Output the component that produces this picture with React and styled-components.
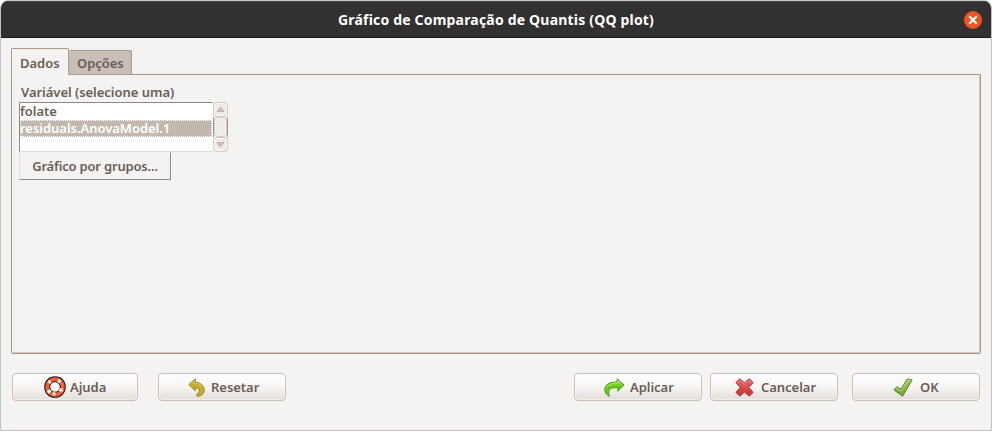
import React from 'react';
import styled, { createGlobalStyle } from 'styled-components';

const Global = createGlobalStyle`
  * { box-sizing: border-box; }
  body { margin: 0; background: #fff; font-family: "Noto Sans", sans-serif; }
`;

const Window = styled.main`
  width: 992px;
  height: 431px;
  display: flex;
  flex-direction: column;
  background: #f5f3f2;
  border: 1px solid #c3c3c1;
  border-radius: 8px 8px 0 0;
  overflow: hidden;
  color: #6a5d54;
  font-size: 13px;
  font-weight: 600;
  letter-spacing: -0.03px;
  line-height: 17px;
  white-space: nowrap;
  cursor: default;
`;

const TitleBar = styled.header`
  flex: none;
  height: 37px;
  display: grid;
  grid-template-columns: 36px 1fr 36px;
  align-items: center;
  justify-items: center;
  background: #323031;
  border-top: 1px solid #474545;
  border-bottom: 1px solid #1f1d1e;
`;

const Title = styled.h1`
  grid-column: 2;
  margin: 0;
  color: #fff;
  font-size: 14px;
  font-weight: 700;
  letter-spacing: 0.19px;
`;

const Close = styled.button`
  width: 18px;
  height: 18px;
  padding: 0;
  border: 0;
  border-radius: 50%;
  background: #ea5420;
  display: flex;
  align-items: center;
  justify-content: center;
`;

const Tabs = styled.nav`
  display: flex;
  align-items: flex-end;
  height: 27px;
  margin: 10px 0 -1px 10px;
`;

const Tab = styled.div`
  width: ${(p) => (p.$active ? 58 : 63)}px;
  height: ${(p) => (p.$active ? 27 : 25)}px;
  padding: ${(p) => (p.$active ? '6px 0 0 8px' : '4px 0 0 8px')};
  border: 1px solid #a99b8e;
  border-left-width: ${(p) => (p.$active ? 1 : 0)}px;
  border-bottom-color: ${(p) => (p.$active ? '#f5f3f2' : '#a99b8e')};
  border-radius: 2px 2px 0 0;
  background: ${(p) => (p.$active ? '#f5f3f2' : '#c8bfb9')};
  z-index: 1;
`;

const Panel = styled.section`
  width: 970px;
  height: 280px;
  margin-left: 10px;
  padding: 9px 7px;
  border: 1px solid #a2968a;
  box-shadow: inset -1px -1px #d3cac3;
  border-radius: 0 0 2px 2px;
`;

const Label = styled.div`
  height: 18px;
  padding-left: 2px;
`;

const ListBox = styled.div`
  display: flex;
  width: 209px;
  height: 50px;
`;

const List = styled.div`
  width: 194px;
  padding-right: 1px;
  background: #fff;
  border: solid;
  border-width: 1px 0 1px 1px;
  border-color: #8b8886 #ddd #dedbd9 #8b8886;
`;

const Item = styled.div`
  height: 17px;
  line-height: 16px;
  ${(p) =>
    p.$selected &&
    `background: #c3b8ad; color: #fff; line-height: 15px; text-indent: -1px;
     border: 1px dotted #fff;`}
`;

const Scrollbar = styled.div`
  width: 15px;
  display: grid;
  grid-template-rows: 15px 20px 15px;
`;

const ScrollPart = styled.div`
  display: flex;
  align-items: center;
  justify-content: center;
  border: 1px solid #d0c8c1;
  border-radius: 4px;
  background: #eeebe8;
  box-shadow: inset 0 0 0 1px #f8f7f5;
`;

const Track = styled.div`
  display: flex;
  border: solid #a2968c;
  border-width: 0 1px;
  > div { flex: 1; }
`;

const GroupButton = styled.button`
  display: block;
  width: 152px;
  height: 28px;
  padding: 0;
  border: 1px solid;
  border-color: #f5f3f2 #8c8988 #8c8988 #dedbd9;
  background: #f5f3f2;
  font: inherit;
  color: inherit;
  letter-spacing: -0.18px;
`;

const Footer = styled.footer`
  display: flex;
  margin: 19px 11px 0;
`;

const Button = styled.button`
  width: ${(p) => p.$width || 128}px;
  height: 28px;
  margin-left: ${(p) => p.$gap || 0}px;
  padding: 0 0 0 ${(p) => p.$inset}px;
  display: flex;
  align-items: center;
  border: 1px solid #cbc0b9;
  border-radius: 4px;
  background: linear-gradient(#fff, #f7f5f4 50%, #e2dcd6);
  box-shadow: inset 0 0 0 1px rgba(255, 255, 255, 0.45);
  font: inherit;
  color: inherit;
  letter-spacing: inherit;
  svg { flex: none; margin-right: ${(p) => p.$space}px; }
`;

const Arrow = ({ down }) => (
  <svg width="9" height="7" viewBox="0 0 9 7">
    <path d={down ? 'M1 1.5h7L4.5 6Z' : 'M1 5.5h7L4.5 1Z'} fill="#cdc3ba" stroke="#b5a99f" strokeWidth=".8" />
  </svg>
);

const HelpIcon = () => (
  <svg width="22" height="22" viewBox="0 0 22 22">
    <circle cx="11" cy="11" r="7.8" fill="none" stroke="#241722" strokeWidth="6" />
    <circle cx="11" cy="11" r="7.8" fill="none" stroke="#f2602e" strokeWidth="4" />
    <path d="m4.4 5 2.4 2M16.2 3.8l-1.7 2.7M3.6 16.6l3-2.2M18.6 14.8l-3.2-1.4M10 19.4l.2-3" stroke="#fff" strokeWidth="2.8" />
    <path d="M1.5 6.6 3.7 3.4 6.4 1.4M15.6 1.4l2.8 1.7 1.9 2.9M1.6 15.6l1.6 2.7 2.4 1.8" fill="none" stroke="#343253" strokeWidth="1" />
  </svg>
);

const ResetIcon = () => (
  <svg width="17" height="19" viewBox="0 0 17 19">
    <path d="M.8 6.6 7.3.9v3.5c5.2 0 8.9 3.2 8.9 7.5 0 3.1-1.8 5.3-5.2 6.2H9v-2.3c2.2-1 2.7-2.4 2.2-3.9-.5-1.4-1.6-2-3.9-2v2.9Z" fill="#c5ad2f" stroke="#9c881f" strokeWidth="1" />
    <path d="m2.5 6.5 3.8-3.3v2.1c4.7 0 7.4 1.8 8.3 4" fill="none" stroke="#e1d06e" strokeWidth=".9" />
  </svg>
);

const ApplyIcon = () => (
  <svg width="21" height="19" viewBox="0 0 21 19">
    <defs>
      <linearGradient id="apply" x2="0" y2="1">
        <stop stopColor="#9bdf58" /><stop offset=".5" stopColor="#64c80f" /><stop offset="1" stopColor="#72ca35" />
      </linearGradient>
    </defs>
    <path d="M13.1.9 20.1 7l-6.3 6.3V9.8c-4.2-.4-7.3.1-8.6 2.2-.9 1.6-.7 3.7.2 6.3C2.2 16.9.6 14.3.8 11.5 1 6.6 5.6 3.8 13.1 4.1Z" fill="url(#apply)" stroke="#4b9e19" />
    <path d="M2.4 10.5C3.5 7 7.5 5.1 13.9 5.2V3.1l3.6 3.1" fill="none" stroke="#c5efa0" strokeWidth=".7" />
  </svg>
);

const CancelIcon = () => (
  <svg width="19" height="19" viewBox="0 0 19 19">
    <defs>
      <linearGradient id="cancel" x2="0" y2="1">
        <stop stopColor="#e56b6a" /><stop offset="1" stopColor="#c92f31" />
      </linearGradient>
    </defs>
    <path d="m4.8.8 4.7 4.1L14.2.8l3.9 3.7-4.3 4.9 4.3 5-3.9 3.7-4.7-4.1-4.7 4.1-3.9-3.7 4.3-5-4.3-4.9Z" fill="url(#cancel)" stroke="#b9272b" strokeLinejoin="round" />
    <path d="M2.4 4.5 4.8 2.3l4.7 4.1 4.7-4.1 2.4 2.2" fill="none" stroke="#f0a09d" strokeWidth=".6" />
  </svg>
);

const OkIcon = () => (
  <svg width="20" height="19" viewBox="0 0 20 19">
    <defs>
      <linearGradient id="ok" x2="0" y2="1">
        <stop stopColor="#a3cf66" /><stop offset="1" stopColor="#70a52f" />
      </linearGradient>
    </defs>
    <path d="m.9 11.9 2.9-3.1 4.2 2.5L14.3.8l4.8 1.3L9.6 18.2Z" fill="url(#ok)" stroke="#568426" strokeLinejoin="round" />
    <path d="m2.5 11.8 1.6-1.6 4.2 2.6L14.8 2l2.5.7" fill="none" stroke="#c2df91" strokeWidth=".7" />
  </svg>
);

export default function App() {
  return (
    <>
      <Global />
      <Window>
        <TitleBar>
          <Title>Gráfico de Comparação de Quantis (QQ plot)</Title>
          <Close aria-label="Fechar">
            <svg width="10" height="10" viewBox="0 0 10 10">
              <path d="m1.3 1.3 7.4 7.4M8.7 1.3 1.3 8.7" stroke="#fff" strokeWidth="2.1" />
            </svg>
          </Close>
        </TitleBar>
        <Tabs>
          <Tab $active>Dados</Tab>
          <Tab>Opções</Tab>
        </Tabs>
        <Panel>
          <Label>Variável (selecione uma)</Label>
          <ListBox>
            <List>
              <Item>folate</Item>
              <Item $selected>residuals.AnovaModel.1</Item>
            </List>
            <Scrollbar>
              <ScrollPart><Arrow /></ScrollPart>
              <Track><ScrollPart /></Track>
              <ScrollPart><Arrow down /></ScrollPart>
            </Scrollbar>
          </ListBox>
          <GroupButton>Gráfico por grupos...</GroupButton>
        </Panel>
        <Footer>
          <Button $width={126} $inset={31} $space={4}><HelpIcon />Ajuda</Button>
          <Button $gap={20} $inset={29} $space={6}><ResetIcon />Resetar</Button>
          <Button $gap={288} $inset={29} $space={5}><ApplyIcon />Aplicar</Button>
          <Button $gap={8} $inset={24} $space={7}><CancelIcon />Cancelar</Button>
          <Button $gap={14} $inset={40} $space={7}><OkIcon />OK</Button>
        </Footer>
      </Window>
    </>
  );
}
